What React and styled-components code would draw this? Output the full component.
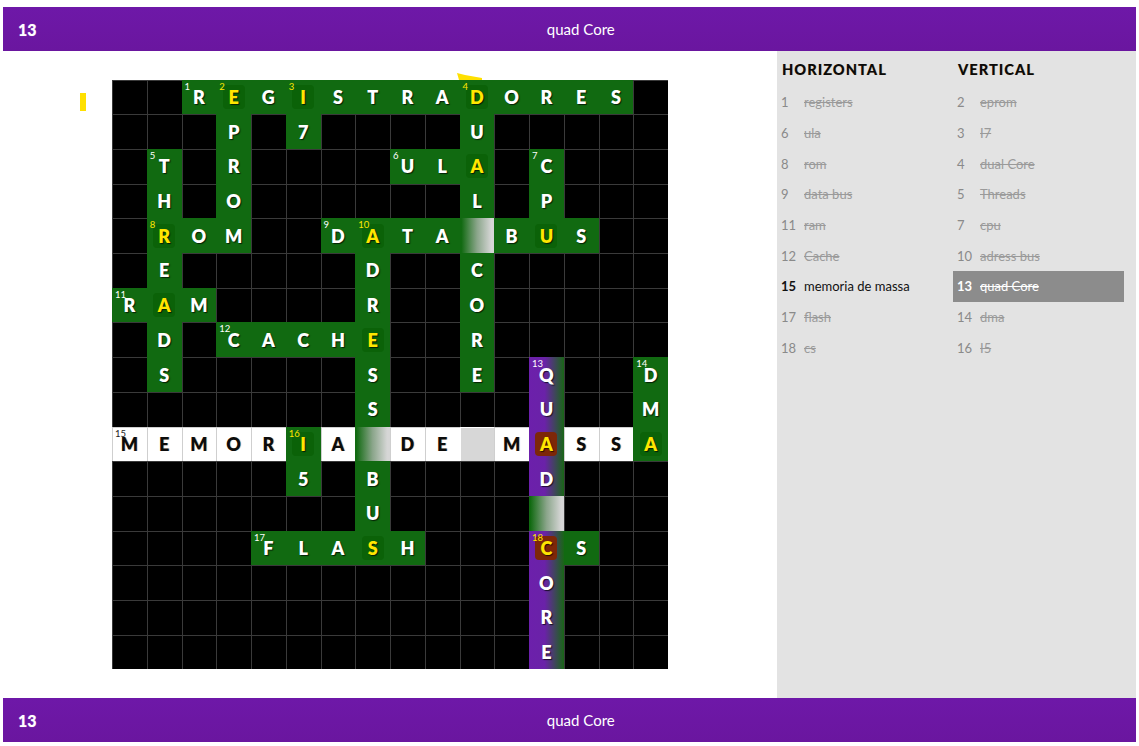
import React from "react";
import styled, { createGlobalStyle, css } from "styled-components";

const Global = createGlobalStyle`
  html, body { margin: 0; padding: 0; background: #fff; }
  body { font-family: Lato, "Open Sans", sans-serif; }
`;

const ROWS = [
  "..REGISTRADORES.",
  "...P.7....U.....",
  ".T.R....ULA.C...",
  ".H.O......L.P...",
  ".ROM..DATA_BUS..",
  ".E.....D..C.....",
  "RAM....R..O.....",
  ".D.CACHE..R.....",
  ".S.....S..E.Q..D",
  ".......S....U..M",
  "MEMORIA_DE_MASSA",
  ".....5.B....D...",
  ".......U...._...",
  "....FLASH...CS..",
  "............O...",
  "............R...",
  "............E...",
];

const YELLOW = new Set([
  "0,3", "0,5", "0,10", "2,10", "4,1", "4,7", "4,12", "6,1", "7,7",
  "10,5", "10,12", "10,15", "13,7", "13,12",
]);

const NUMBERS = {
  "0,2": 1, "0,3": 2, "0,5": 3, "0,10": 4, "2,1": 5, "2,8": 6, "2,12": 7,
  "4,1": 8, "4,6": 9, "4,7": 10, "6,0": 11, "7,3": 12, "8,12": 13,
  "8,15": 14, "10,0": 15, "10,5": 16, "13,4": 17, "13,12": 18,
};

function kindOf(r, c, ch) {
  if (ch === ".") return "black";
  if (ch === "_") {
    if (r === 10 && c === 10) return "blank";
    return "gap";
  }
  if (c === 12 && r >= 8) return "purple";
  if (r === 10 && c !== 5 && c !== 15) return "white";
  return "green";
}

const HORIZONTAL = [
  { n: 1, t: "registers", s: "done" },
  { n: 6, t: "ula", s: "done" },
  { n: 8, t: "rom", s: "done" },
  { n: 9, t: "data bus", s: "done" },
  { n: 11, t: "ram", s: "done" },
  { n: 12, t: "Cache", s: "done" },
  { n: 15, t: "memoria de massa", s: "open" },
  { n: 17, t: "flash", s: "done" },
  { n: 18, t: "cs", s: "done" },
];

const VERTICAL = [
  { n: 2, t: "eprom", s: "done" },
  { n: 3, t: "I7", s: "done" },
  { n: 4, t: "dual Core", s: "done" },
  { n: 5, t: "Threads", s: "done" },
  { n: 7, t: "cpu", s: "done" },
  { n: 10, t: "adress bus", s: "done" },
  { n: 13, t: "quad Core", s: "active" },
  { n: 14, t: "dma", s: "done" },
  { n: 16, t: "I5", s: "done" },
];

const Page = styled.div`
  display: flex;
  flex-direction: column;
  padding: 7px 3px 4px 3px;
  height: 746px;
  box-sizing: border-box;
`;

const Bar = styled.div`
  height: 44px;
  flex: none;
  display: flex;
  align-items: center;
  background: linear-gradient(#6e18a8, #6a169f);
  color: #fff;
`;

const BarNumber = styled.div`
  padding-left: 15px;
  font-family: Lato, sans-serif;
  font-weight: 900;
  font-size: 16px;
  text-shadow: 0 0 1px rgba(255,255,255,0.4);
`;

const BarTitle = styled.div`
  flex: 1;
  text-align: center;
  padding-right: 11px;
  font-family: Lato, sans-serif;
  font-size: 15px;
`;

const Main = styled.div`
  flex: 1;
  display: flex;
  min-height: 0;
`;

const Board = styled.div`
  position: relative;
  width: 774px;
  flex: none;
  display: flex;
  align-items: center;
  justify-content: center;
  background: #fff;
`;

const Grid = styled.div`
  display: grid;
  grid-template-columns: repeat(16, 34.75px);
  grid-auto-rows: 34.7px;
  background: #000;
`;

const kinds = {
  black: css`
    background: #000;
    box-shadow: inset 1px 1px 0 #3a3a3a;
  `,
  green: css`
    background: #116a11;
  `,
  white: css`
    background: #fff;
    box-shadow: inset 1px 1px 0 #cfcfcf;
  `,
  purple: css`
    background: linear-gradient(90deg, #6c20ab 0%, #6a22a8 45%, #196616 100%);
  `,
  gap: css`
    background: linear-gradient(90deg, #116a11 4%, #8aa58a 50%, #d6d6d6 92%);
  `,
  blank: css`
    background: #d7d7d7;
    box-shadow: inset 1px 1px 0 #fff;
  `,
};

const Cell = styled.div`
  position: relative;
  display: flex;
  align-items: center;
  justify-content: center;
  ${(p) => kinds[p.$kind]}
`;

const Patch = styled.span`
  position: absolute;
  left: 50%;
  top: 50%;
  width: 22px;
  height: 24px;
  transform: translate(-50%, -50%);
  border-radius: 4px;
  background: ${(p) => (p.$purple ? "#7d2708" : "#0b6208")};
`;

const Letter = styled.span`
  position: relative;
  font-family: Lato, sans-serif;
  font-weight: 800;
  font-size: 18px;
  line-height: 1;
  color: ${(p) => (p.$yellow ? "#ffe600" : p.$dark ? "#0c0c0c" : "#fff")};
  text-shadow: ${(p) =>
    p.$dark ? "1px 0 0 rgba(220,140,40,0.35)" : "1px 1px 1px rgba(0,0,0,0.7)"};
`;

const Num = styled.span`
  position: absolute;
  left: 3px;
  top: 2px;
  font-family: Lato, sans-serif;
  font-size: 9.5px;
  line-height: 1;
  color: ${(p) => (p.$yellow ? "#ffe600" : p.$dark ? "#222" : "#fff")};
`;

const Cursor = styled.div`
  position: absolute;
  left: 77px;
  top: 42px;
  width: 6px;
  height: 18px;
  background: #ffe000;
`;

const Wedge = styled.svg`
  position: absolute;
  left: 452px;
  top: 22px;
`;

const Side = styled.div`
  flex: 1;
  background: #e3e3e3;
  display: grid;
  grid-template-columns: 176px 176px;
  align-content: start;
  padding-top: 4px;
`;

const Column = styled.div`
  display: flex;
  flex-direction: column;
`;

const Heading = styled.div`
  height: 32px;
  line-height: 30px;
  padding-left: 5px;
  font-family: Lato, sans-serif;
  font-weight: 900;
  font-size: 14.5px;
  letter-spacing: 1.1px;
  color: #0a0a0a;
  text-shadow: 0.5px 0 0 rgba(160,90,0,0.5);
`;

const Item = styled.div`
  display: flex;
  align-items: center;
  width: 171px;
  height: 30.67px;
  padding-left: 4px;
  box-sizing: border-box;
  font-family: Lato, sans-serif;
  font-size: 13px;
  background: ${(p) => (p.$s === "active" ? "#8c8c8c" : "transparent")};
`;

const ItemNum = styled.span`
  width: 23px;
  flex: none;
  font-weight: ${(p) => (p.$s === "done" ? 400 : 700)};
  color: ${(p) => (p.$s === "done" ? "#8a8a8a" : p.$s === "active" ? "#fff" : "#111")};
`;

const ItemText = styled.span`
  text-decoration: ${(p) => (p.$s === "open" ? "none" : "line-through")};
  color: ${(p) => (p.$s === "done" ? "#9a9a9a" : p.$s === "active" ? "#fff" : "#111")};
`;

function Clue({ n, t, s }) {
  return (
    <Item $s={s}>
      <ItemNum $s={s}>{n}</ItemNum>
      <ItemText $s={s}>{t}</ItemText>
    </Item>
  );
}

function Header() {
  return (
    <Bar>
      <BarNumber>13</BarNumber>
      <BarTitle>quad Core</BarTitle>
    </Bar>
  );
}

export default function App() {
  const cells = [];
  ROWS.forEach((row, r) => {
    row.split("").forEach((ch, c) => {
      const key = `${r},${c}`;
      const kind = kindOf(r, c, ch);
      const yellow = YELLOW.has(key);
      const dark = kind === "white";
      const num = NUMBERS[key];
      cells.push(
        <Cell key={key} $kind={kind}>
          {yellow && <Patch $purple={kind === "purple"} />}
          {ch !== "." && ch !== "_" && (
            <Letter $yellow={yellow} $dark={dark}>
              {ch}
            </Letter>
          )}
          {num && (
            <Num $yellow={yellow} $dark={dark}>
              {num}
            </Num>
          )}
        </Cell>
      );
    });
  });

  return (
    <>
      <Global />
      <Page>
        <Header />
        <Main>
          <Board>
            <Cursor />
            <Wedge width="28" height="8" viewBox="0 0 28 8">
              <polygon points="2,0 10,2 27,5 27,7 4,7" fill="#ffe000" />
            </Wedge>
            <Grid>{cells}</Grid>
          </Board>
          <Side>
            <Column>
              <Heading>HORIZONTAL</Heading>
              {HORIZONTAL.map((c) => (
                <Clue key={c.n} {...c} />
              ))}
            </Column>
            <Column>
              <Heading>VERTICAL</Heading>
              {VERTICAL.map((c) => (
                <Clue key={c.n} {...c} />
              ))}
            </Column>
          </Side>
        </Main>
        <Header />
      </Page>
    </>
  );
}
